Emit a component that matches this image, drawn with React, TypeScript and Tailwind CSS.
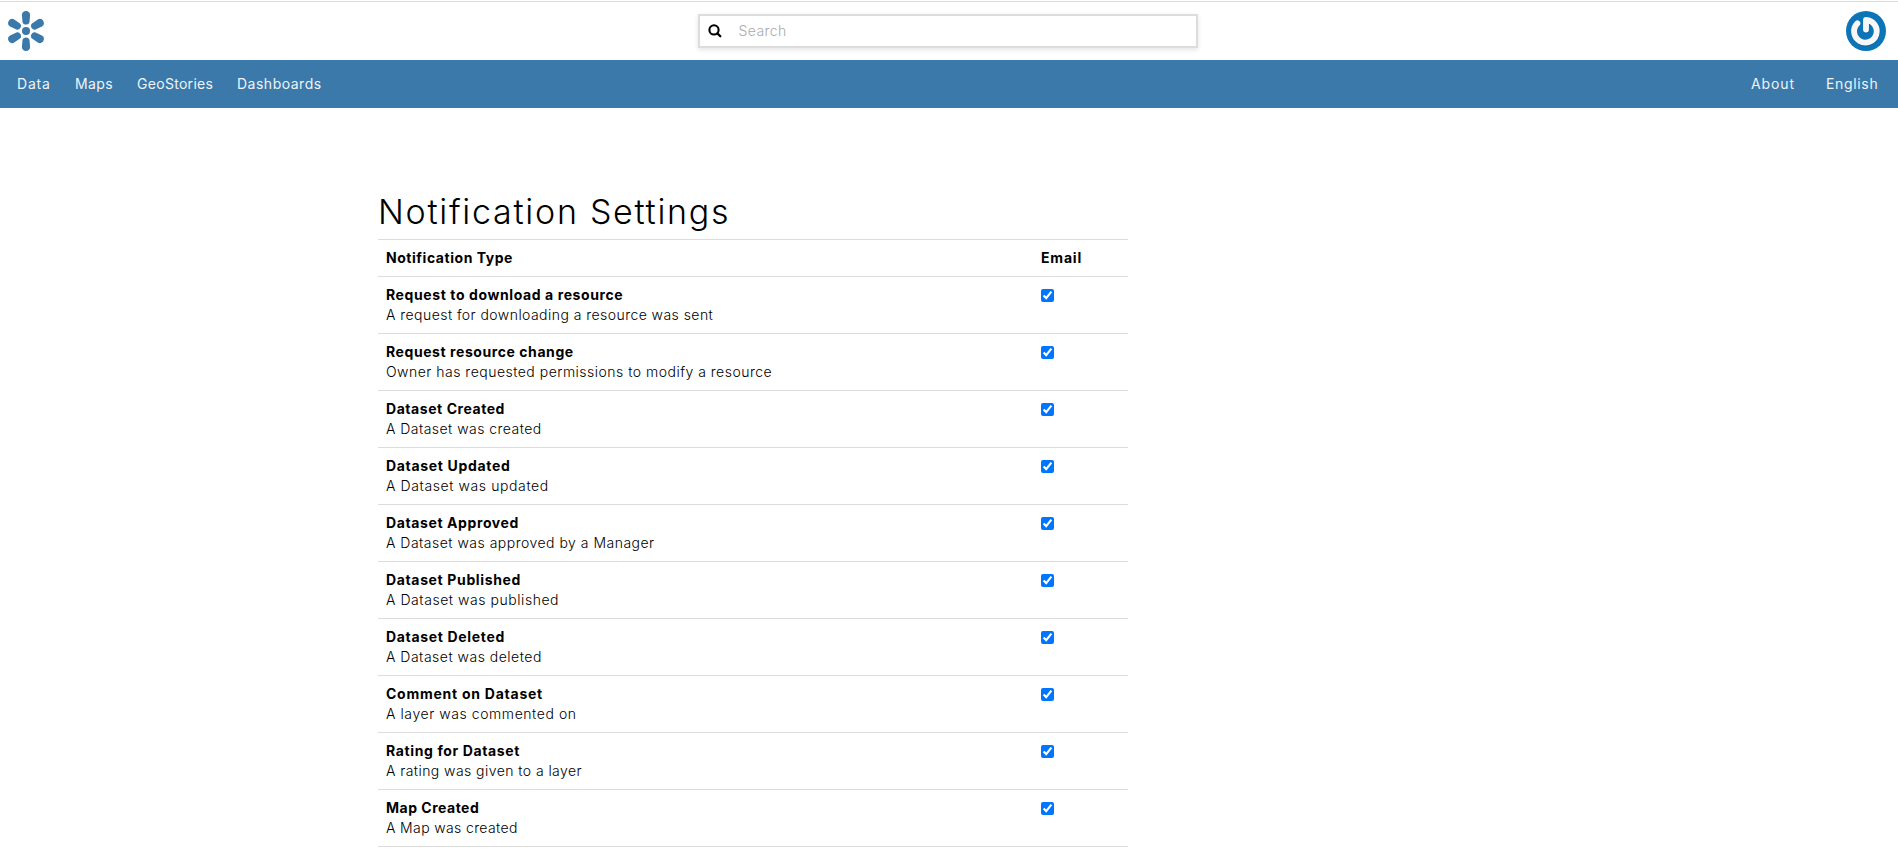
const notifications = [
  { title: "Request to download a resource", titleClass: "tracking-[0.6px]", text: "A request for downloading a resource was sent", textClass: "tracking-[0.45px]" },
  { title: "Request resource change", titleClass: "tracking-[0.57px]", text: "Owner has requested permissions to modify a resource", textClass: "tracking-[0.49px]" },
  { title: "Dataset Created", titleClass: "tracking-[0.556px]", text: "A Dataset was created", textClass: "tracking-[0.46px]" },
  { title: "Dataset Updated", titleClass: "tracking-[0.68px]", text: "A Dataset was updated", textClass: "tracking-[0.6px]" },
  { title: "Dataset Approved", titleClass: "tracking-[0.607px]", text: "A Dataset was approved by a Manager", textClass: "tracking-[0.49px]" },
  { title: "Dataset Published", titleClass: "tracking-[0.641px]", text: "A Dataset was published", textClass: "tracking-[0.55px]" },
  { title: "Dataset Deleted", titleClass: "tracking-[0.672px]", text: "A Dataset was deleted", textClass: "tracking-[0.5px]" },
  { title: "Comment on Dataset", titleClass: "tracking-[0.75px]", text: "A layer was commented on", textClass: "tracking-[0.57px]" },
  { title: "Rating for Dataset", titleClass: "tracking-[0.62px]", text: "A rating was given to a layer", textClass: "tracking-[0.44px]" },
  { title: "Map Created", titleClass: "tracking-[0.5px]", text: "A Map was created", textClass: "tracking-[0.37px]" },
];

function Logo() {
  return (
    <svg className="h-10 w-10" viewBox="-20 -20 40 40" fill="#3a79aa">
      <circle r="4" />
      {[0, 60, 120, 180, 240, 300].map((angle) => (
        <path
          key={angle}
          transform={`rotate(${angle})`}
          d="M0 -20C2.5 -20 4.2 -18.3 4.1 -16L3.5 -9C3.3 -7.2 1.5 -6.4 0 -6.4S-3.3 -7.2 -3.5 -9L-4.1 -16C-4.2 -18.3 -2.5 -20 0 -20Z"
        />
      ))}
    </svg>
  );
}

function SearchIcon() {
  return (
    <svg className="h-[14px] w-[14px]" viewBox="0 0 14 14" fill="none" stroke="#000000">
      <circle cx="6" cy="5.9" r="4.6" strokeWidth="2.1" />
      <path d="M9.4 9.4L12.3 12.3" strokeWidth="2.3" strokeLinecap="round" />
    </svg>
  );
}

function Avatar() {
  return (
    <svg className="h-10 w-10" viewBox="-20 -20 40 40">
      <circle r="20" fill="#0b75b7" />
      <g fill="none" strokeLinecap="round" strokeLinejoin="round">
        <path d="M0 -1.5V-11A11.3 11.3 0 1 1 -8.6 -7.7" stroke="#075d93" strokeWidth="6.4" opacity="0.5" transform="translate(0.3 0.8)" />
        <path d="M0 -1.5V-11A11.3 11.3 0 1 1 -8.6 -7.7" stroke="#f7f7f7" strokeWidth="5.9" />
      </g>
    </svg>
  );
}

function Header() {
  return (
    <header className="flex h-[59px] items-start justify-between border-t border-[#dddddd] pt-[9px] pr-3 pl-1.5">
      <Logo />
      <label className="mt-[3px] ml-1 flex h-[34px] w-[500px] items-center border-2 border-[#dddddd] bg-white pl-2 shadow-[0_2px_5px_rgba(0,0,0,0.1)]">
        <SearchIcon />
        <input
          type="text"
          placeholder="Search"
          className="ml-[16.5px] h-full flex-1 pb-px text-sm font-light tracking-[0.4px] outline-none placeholder:text-[#aaaaaa]"
        />
      </label>
      <Avatar />
    </header>
  );
}

function NavBar() {
  return (
    <nav className="flex h-12 items-center justify-between bg-[#3a79aa] pr-5 pl-[17px] text-sm leading-5 text-[#eef3f7]">
      <div className="flex">
        <a className="w-[58px] tracking-[0.8px]">Data</a>
        <a className="w-[62px] tracking-[0.4px]">Maps</a>
        <a className="w-[100px] tracking-[0.3px]">GeoStories</a>
        <a className="tracking-[0.5px]">Dashboards</a>
      </div>
      <div className="flex">
        <a className="w-[75px] tracking-[0.9px]">About</a>
        <a className="w-[52px] tracking-[0.66px]">English</a>
      </div>
    </nav>
  );
}

export default function App() {
  return (
    <div className="h-[858px] overflow-hidden bg-white pt-px font-[Inter,sans-serif] text-black">
      <Header />
      <NavBar />
      <main className="ml-[378px] w-[750px] pt-[84px]">
        <h1 className="mb-[7px] text-[34px] leading-10 font-light tracking-[1.72px]">Notification Settings</h1>
        <table className="w-full table-fixed border-separate border-spacing-0 text-left align-top text-sm leading-5">
          <thead>
            <tr>
              <th className="w-[655px] border-t border-[#dddddd] p-2 font-bold tracking-[0.543px]">Notification Type</th>
              <th className="border-t border-[#dddddd] p-2 font-bold tracking-[0.8px]">Email</th>
            </tr>
          </thead>
          <tbody>
            {notifications.map((n) => (
              <tr key={n.title}>
                <td className="border-t border-[#dddddd] p-2">
                  <div className={`font-bold ${n.titleClass}`}>{n.title}</div>
                  <div className={`font-light ${n.textClass}`}>{n.text}</div>
                </td>
                <td className="border-t border-[#dddddd] p-2 align-top">
                  <input type="checkbox" defaultChecked className="mt-1 block h-[13px] w-[13px]" />
                </td>
              </tr>
            ))}
            <tr>
              <td className="h-5 border-t border-[#dddddd]" />
              <td className="h-5 border-t border-[#dddddd]" />
            </tr>
          </tbody>
        </table>
      </main>
    </div>
  );
}
